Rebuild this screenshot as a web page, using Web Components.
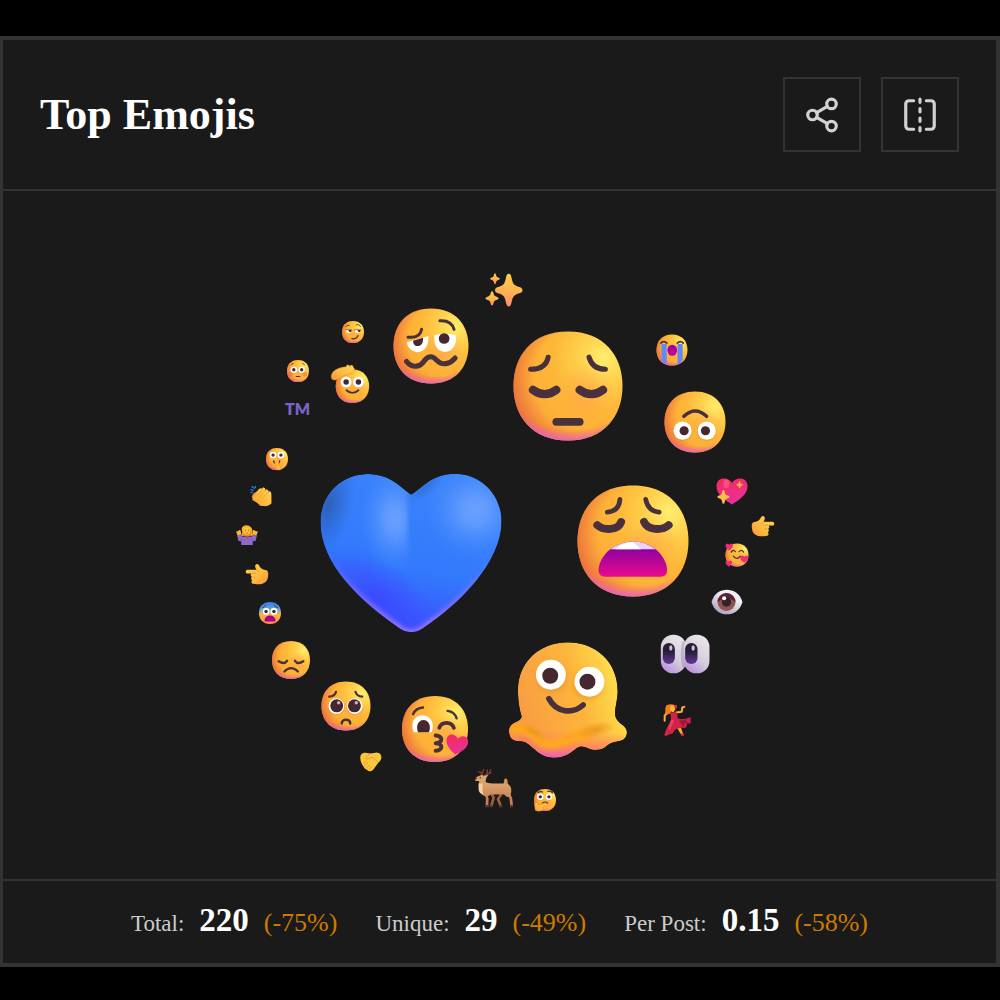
<!DOCTYPE html>
<html lang="en">
<head>
<meta charset="utf-8">
<meta name="viewport" content="width=device-width, initial-scale=1">
<title>Top Emojis</title>
<style>
  body {
    margin: 0;
    padding: 36px 0;
    background: #000;
    color: #fff;
    font-family: "Liberation Serif", serif;
  }
</style>
</head>
<body>
<stats-card>
  <h2 slot="title">Top Emojis</h2>
  <icon-button slot="actions" icon="share" label="Share"></icon-button>
  <icon-button slot="actions" icon="compare" label="Compare" style="--edge: #38332e"></icon-button>
  <emoji-cloud></emoji-cloud>
  <stat-item slot="stats" label="Total:" value="220" change="(-75%)"></stat-item>
  <stat-item slot="stats" label="Unique:" value="29" change="(-49%)"></stat-item>
  <stat-item slot="stats" label="Per Post:" value="0.15" change="(-58%)"></stat-item>
</stats-card>

<script>
customElements.define('stats-card', class StatsCard extends HTMLElement {
  constructor() {
    super();
    this.attachShadow({mode: 'open'});
    this.shadowRoot.innerHTML = `
    <style>
      :host {
        display: block;
        background: #1a1a1a;
        border: solid #333;
        border-width: 4px 4px 4px 3px;
      }
      header {
        display: flex;
        align-items: center;
        justify-content: space-between;
        padding: 37px;
        border-bottom: 2px solid #333;
      }
      .actions {
        display: flex;
        gap: 20px;
      }
      ::slotted(h2) {
        margin: 0;
        font-size: 44px;
        line-height: 48px;
        font-weight: 700;
      }
      footer {
        display: flex;
        flex-wrap: wrap;
        align-items: baseline;
        justify-content: center;
        gap: 16px 38px;
        padding: 19px 36px;
        border-top: 2px solid #333;
      }
    </style>
    <header>
      <slot name="title"></slot>
      <div class="actions"><slot name="actions"></slot></div>
    </header>
    <main><slot></slot></main>
    <footer><slot name="stats"></slot></footer>
    `;
  }
});

customElements.define('stat-item', class StatItem extends HTMLElement {
  constructor() {
    super();
    this.attachShadow({mode: 'open'});
  }

  connectedCallback() {
    this.shadowRoot.innerHTML = `
    <style>
      :host {
        display: flex;
        align-items: baseline;
        gap: 15px;
        line-height: 40px;
        white-space: nowrap;
      }
      .label {
        font-size: 23px;
        color: #ccc;
      }
      .value {
        font-size: 33px;
        font-weight: 700;
      }
      .change {
        font-size: 26px;
        color: #cc7a00;
      }
    </style>
    <span class="label">${this.getAttribute('label')}</span>
    <span class="value">${this.getAttribute('value')}</span>
    <span class="change">${this.getAttribute('change')}</span>
    `;
  }
});

const icons = {
  share: `
    <circle cx="18" cy="5" r="3"/><circle cx="6" cy="12" r="3"/><circle cx="18" cy="19" r="3"/>
    <path d="M8.6 13.5l6.8 4M15.4 6.5l-6.8 4"/>`,
  compare: `
    <path d="M8 3H5a2 2 0 0 0-2 2v14c0 1.1.9 2 2 2h3"/>
    <path d="M16 3h3a2 2 0 0 1 2 2v14a2 2 0 0 1-2 2h-3"/>
    <path d="M12 20v2M12 14v2M12 8v2M12 2v2"/>`
};

customElements.define('icon-button', class IconButton extends HTMLElement {
  constructor() {
    super();
    this.attachShadow({mode: 'open'});
  }

  connectedCallback() {
    this.shadowRoot.innerHTML = `
    <style>
      :host {
        display: block;
      }
      button {
        display: flex;
        align-items: center;
        justify-content: center;
        width: 78px;
        height: 75px;
        padding: 0;
        border: 2px solid var(--edge, #333);
        background: transparent;
        color: #d2d2d2;
        cursor: pointer;
      }
      button:hover {
        background: #242424;
      }
      svg {
        width: 38px;
        height: 38px;
        fill: none;
        stroke: currentColor;
        stroke-width: 2;
        stroke-linecap: round;
        stroke-linejoin: round;
      }
    </style>
    <button type="button" aria-label="${this.getAttribute('label')}">
      <svg viewBox="0 0 24 24" aria-hidden="true">${icons[this.getAttribute('icon')]}</svg>
    </button>
    `;
  }
});

// gradients shared by all the drawings; ids stay inside each shadow root
const defs = `
<defs>
  <radialGradient id="skin" cx=".83" cy=".24" r=".85">
    <stop offset="0" stop-color="#ffee6e"/>
    <stop offset=".26" stop-color="#ffd14c"/>
    <stop offset=".56" stop-color="#feb738"/>
    <stop offset="1" stop-color="#fcab38"/>
  </radialGradient>
  <radialGradient id="side" cx=".68" cy=".42" r=".74">
    <stop offset=".66" stop-color="#ea6a3c" stop-opacity="0"/>
    <stop offset="1" stop-color="#e8603f" stop-opacity=".9"/>
  </radialGradient>
  <radialGradient id="under" cx=".54" cy=".16" r=".86">
    <stop offset=".86" stop-color="#f0688c" stop-opacity="0"/>
    <stop offset="1" stop-color="#e45ddc"/>
  </radialGradient>
  <radialGradient id="cheek" cx=".66" cy=".56" r=".26">
    <stop offset="0" stop-color="#ff9d4a" stop-opacity=".6"/>
    <stop offset="1" stop-color="#ff9d4a" stop-opacity="0"/>
  </radialGradient>
  <linearGradient id="mouth" x1="0" y1="0" x2="0" y2="1">
    <stop offset=".2" stop-color="#8d00a0"/>
    <stop offset="1" stop-color="#ea0a8c"/>
  </linearGradient>
  <linearGradient id="hand" x1="1" y1="0" x2="0" y2="1">
    <stop offset="0" stop-color="#ffd755"/>
    <stop offset=".6" stop-color="#fdb93c"/>
    <stop offset="1" stop-color="#f59445"/>
  </linearGradient>
  <linearGradient id="rose" x1="0" y1="0" x2=".3" y2="1">
    <stop offset="0" stop-color="#f42a5a"/>
    <stop offset="1" stop-color="#e9309a"/>
  </linearGradient>
  <linearGradient id="star" x1=".5" y1="0" x2=".4" y2="1">
    <stop offset="0" stop-color="#ffcd4a"/>
    <stop offset=".5" stop-color="#ffb54f"/>
    <stop offset="1" stop-color="#ff8a6e"/>
  </linearGradient>
</defs>`;

const round = 'M16 30C25.3 30 30 23.7 30 16S25.3 2 16 2 2 8.3 2 16s4.7 14 14 14Z';
const head = `
  <path d="${round}" fill="url(#skin)"/>
  <path d="${round}" fill="url(#cheek)"/>
  <path d="${round}" fill="url(#side)"/>
  <path d="${round}" fill="url(#under)"/>`;
const line = (d, width = 1.3) =>
  `<path d="${d}" fill="none" stroke="#48303c" stroke-width="${width}" stroke-linecap="round" stroke-linejoin="round"/>`;
const eye = (x, y, r, px = x, py = y, pr = r / 2) =>
  `<circle cx="${x}" cy="${y + .3}" r="${r + .3}" fill="#d97c1c" opacity=".35"/>
   <circle cx="${x}" cy="${y}" r="${r}" fill="#fff"/>
   <circle cx="${px}" cy="${py}" r="${pr}" fill="#44272f"/>`;
const face = art => ({box: '2 2 28 28', art: head + art});
const heart = (x, y, sx, sy = sx, turn = 0) =>
  `<path transform="translate(${x} ${y}) rotate(${turn}) scale(${sx} ${sy})" fill="url(#rose)" d="M5 2C4 0 0-.4 0 3.200 0 6 3 8 5 9.300 7 8 10 6 10 3.200 10-.4 6 0 5 2Z"/>`;
const spark = (x, y, rx, ry, fill = 'url(#star)') =>
  `<path transform="translate(${x} ${y}) scale(${rx} ${ry})" fill="${fill}" d="M0-1C.12-1 .17-.9 .2-.76 .29-.38 .38-.29 .78-.19 .92-.15 1-.1 1 0S.92.15 .78.19C.38.29 .29.38 .2.76 .17.9 .12 1 0 1S-.17.9-.2.76C-.29.38-.38.29-.78.19-.92.15-1 .1-1 0S-.92-.15-.78-.19C-.38-.29-.29-.38-.2-.76-.17-.9-.12-1 0-1Z"/>`;

const heartShape = 'M333 132C303 114 272 70 203 70 120 70 60 135 60 215c0 130 125 240 240 320q33 22 65 0C480 460 604 335 604 213 604 135 545 69 462 69c-67 0-99 45-129 63Z';
const meltShape = 'M234 36C150 36 84 95 84 180c0 36 5 58 11 80q-1 10-20 18c-17 8-20 21-17 34 4 20 20 22 38 22 29 4 44 48 97 50 52-2 60-34 82-34 20 2 25 11 45 10 30-1 30-20 55-24 20-2 35-6 37-28 0-23-27-25-34-46-6-22 6-47 6-79C384 95 318 36 234 36Z';
const pointing = `
  <path fill="url(#hand)" d="M5 20C0 26 0 32 2 42c1 10 10 20 24 21 14 0 22 0 25-3 3-3 1-8-1-9 5-3 5-8 1-10 5-3 5-8 2-11h12c7 0 7-11 0-12H37c4-5 6-12 2-16-4-4-9 0-10 3-3 8-11 14-24 15Z"/>
  <path fill="none" stroke="#e88a2c" stroke-width="2" d="M52 29H38M48 41h-7M28 24q8-2 10-7"/>`;

const emojis = {
  sparkles: {
    box: '313 40 113 101',
    art: `${spark(384, 91, 42, 50)}${spark(342, 56, 15, 16)}${spark(333, 116, 20, 22)}`
  },
  woozy: face(`
    <path d="M7 14.600 15 12.300c.3 3-1 5.800-3.800 6-2.400 0-4-1.800-4.200-3.700Z" fill="#fff"/>
    <path d="M9.300 14 13 12.900c.2 1.800-.6 3.100-2 3.100-1.100 0-1.700-.9-1.700-2Z" fill="#44272f"/>
    <path d="M17.300 12C18.500 11.300 24 11.300 25.300 12 25.700 15.800 23.800 18.200 21.200 18.200 18.400 18.200 16.800 15.600 17.300 12Z" fill="#fff"/>
    <circle cx="20.900" cy="13.200" r="2" fill="#44272f"/>
    ${line('M7.400 12.700Q12 13.200 12.500 9.700', 1.1)}${line('M19.300 6.600Q23.600 6.300 24.600 9.800', 1.1)}
    ${line('M6.900 21.800C9 24.300 11.800 24 13.300 21.800 15 19.500 16.500 19.600 18 21.200 20.300 23.500 23 22.800 25 20.500', 1.9)}`),
  pensive: face(`
    ${line('M6.400 11.700Q10.300 11.700 10.900 8.600')}${line('M21.400 8.600Q22.300 11.700 25.600 11.700')}
    ${line('M7 17Q10 19.200 13 17', 2.1)}${line('M19 17Q22 19.200 25 17', 2.1)}
    ${line('M13 25.200H19', 2)}`),
  weary: face(`
    ${line('M9.500 8.700Q12.500 8.500 12.700 5.500', 1.2)}${line('M19.200 5.500Q19.800 8.500 22.600 8.700', 1.2)}
    ${line('M7 12C8.700 13.500 12.300 13.300 13 11.200', 2)}${line('M18.800 11.200C19.700 13.300 23.300 13.500 25 12', 2)}
    <path fill="url(#mouth)" d="M16 16.100C10.500 16.100 7.300 20.500 7.300 23.300Q7.300 25 9 25H23Q24.600 25 24.600 23.300C24.600 20.500 21.500 16.100 16 16.100Z"/>
    <path fill="#e9d3fb" d="M10.200 18.100C12 16.800 13.800 16.100 16 16.100s4 .7 5.700 2Z"/>
    <path fill="#fff" d="M11.500 18.100Q13 16.500 16 16.200l2 1.900Z"/>`),
  sob: face(`
    <path fill="#6188ff" d="M6.500 10.500h4.700V29Q8.400 28 6.500 25.500ZM21 10.500h4.600v15Q23.700 28 21 29Z"/>
    <ellipse cx="16.200" cy="16.200" rx="4.300" ry="5" fill="#a5009b"/><ellipse cx="16.200" cy="18" rx="2.500" ry="2.600" fill="#c4069a"/>
    ${line('M6 9.800Q8.500 7 11.400 9.800', 1.5)}${line('M20.800 9.800Q23.500 7 26.200 9.800', 1.5)}`),
  upside: face(`
    ${line('M10.900 13.400Q16.100 8.500 21.300 13.400', 1.6)}
    ${eye(10.3, 20, 4.2, 11, 20, 2.1)}${eye(21.4, 20, 4.2, 20.8, 20, 2.1)}`),
  kiss: face(`
    ${line('M6.700 9.700Q7.900 7.100 10.900 6.900', 1)}${line('M21.300 8.300Q24.300 8.600 25.200 11.500', 1)}
    <path fill="#fff" d="M7 17.400C5.300 13.500 7.300 10.200 10.700 10.200c3.500 0 5.300 3.600 3.900 7.200Z"/>
    <path fill="#44272f" d="M8.800 17.400C7.700 14.600 9 12.200 11.100 12.200s3.500 2.600 2.300 5.200Z"/>
    ${line('M17.800 15.500C18.800 12.700 23 12.700 24 15.500', 1.6)}
    ${line('M16.300 18.800C19.600 18.800 19.400 22 16.300 22 19.400 22 19.600 25.200 16.300 25.200', 1.7)}
    ${heart(21.4, 17.6, .92, .92, 9)}`),
  pleading: face(`
    ${line('M6.400 10.700Q9.700 10.500 10.300 7.900')}${line('M21.400 7.900Q22.100 10.500 25.300 10.700')}
    ${eye(10.5, 16.1, 4.5, 10.7, 15.9, 3.7)}${eye(21, 16.1, 4.5, 20.8, 15.9, 3.7)}
    <circle cx="11.800" cy="14.200" r="1" fill="#c9aeb2"/><circle cx="21.900" cy="14.200" r="1" fill="#c9aeb2"/>
    ${line('M13.600 25.900C13.600 23.200 18.200 23.200 18.400 25.900', 1.5)}`),
  sad: face(`
    ${line('M6.900 16.900Q11 19.600 13.100 16.600', 1.7)}${line('M18.900 16.600Q21 19.600 25.100 16.900', 1.7)}
    ${line('M11.100 24.500Q16.100 19.500 21.100 24.500', 1.6)}`),
  flushed: face(`
    ${eye(10.7, 14.4, 4.2)}${eye(20.7, 14.4, 4.2)}
    ${line('M7 8.500Q8 7 10 6.500M22 6.500Q24 7 25 8.500', 1)}${line('M13.800 23H18.200', 1.5)}
    <circle cx="6.500" cy="20" r="3" fill="#f0535c" opacity=".4"/><circle cx="25" cy="20" r="3" fill="#f0535c" opacity=".4"/>`),
  smirk: face(`
    <path fill="#fff" d="M6.500 13.500h8c0 5-8 5-8 0ZM18 13.500h8c0 5-8 5-8 0Z"/>
    <path fill="#44272f" d="M10.500 13.500h3.800c0 3.500-3.800 3.500-3.800 0ZM22 13.500h3.800c0 3.500-3.800 3.500-3.800 0Z"/>
    ${line('M6.500 9.500Q8 6.500 11 7.500M20 7Q24 5.500 25.500 9', 1.1)}${line('M6.500 13.300H14.500M18 13.300H26', .7)}
    ${line('M14.500 24.500Q20.500 25.500 22.500 20.500', 1.6)}`),
  shush: face(`
    ${eye(11, 11, 4.3)}${eye(21, 11, 4.3)}
    ${line('M11.500 18.500q1 1 1 2.500M19.500 18.500q-1 1-1 2.500', 1.6)}
    <path fill="url(#hand)" stroke="#e9852f" stroke-width=".5" d="M16.500 18q1.800 0 1.800 3v3l3 1.500L20 30h-5.500l-1-5 1.200-2V21q0-3 1.800-3Z"/>`),
  thinking: face(`
    ${eye(10, 12, 4.2)}${eye(21, 12, 4.2)}
    ${line('M7 6.500Q10 4.500 13 5.800M19.500 5Q23.500 4 25.500 7M12.500 20Q16.500 17 19.500 20', 1.4)}
    <path fill="url(#hand)" stroke="#d8802d" stroke-width=".5" d="M2.500 21Q5 18 7 20l.8 2.500L17 20.500q2 1 .2 2.700L13 25q2.500 2-1 4.500-5 2-8.500-.5Z"/>`),
  anguished: {
    box: '2 2 28 28',
    art: `<linearGradient id="cold" x1="0" y1="0" x2="0" y2="1">
        <stop offset=".08" stop-color="#3687e8"/><stop offset=".35" stop-color="#79a5cb"/>
        <stop offset=".58" stop-color="#ffb83e"/><stop offset="1" stop-color="#ff8a4a"/>
      </linearGradient>
      <path d="${round}" fill="url(#cold)"/>
      ${eye(11, 14, 4.4)}${eye(21, 14, 4.4)}
      ${line('M6.500 9Q9.500 8.800 10.500 6M21.500 6Q22.500 8.800 25.500 9', 1.2)}
      <path fill="#a60091" d="M16 19.200C11.500 19.200 9 22.500 9 25.700q0 1.200 1.200 1.200h11.600q1.200 0 1.200-1.200c0-3.200-2.500-6.500-7-6.500Z"/>`
  },
  loved: face(`
    ${line('M9 12.500Q11 8.500 14 12M18.500 12Q21.500 8.500 24 12.500', 1.5)}${line('M11.500 17.500Q16 23 20 17.500', 1.5)}
    ${heart(2, 2, .9)}${heart(2, 22.5, .8)}${heart(20, 16.5, 1)}`),
  heart: {
    box: '60 69 544 477',
    art: `<linearGradient id="h1" x1=".65" y1="0" x2=".4" y2="1">
        <stop offset="0" stop-color="#3b84fb"/><stop offset=".6" stop-color="#3279fc"/><stop offset="1" stop-color="#3c4dff"/>
      </linearGradient>
      <radialGradient id="h2"><stop offset="0" stop-color="#69a0ff"/><stop offset=".25" stop-color="#69a0ff" stop-opacity=".85"/><stop offset="1" stop-color="#478cff" stop-opacity="0"/></radialGradient>
      <radialGradient id="h3"><stop offset="0" stop-color="#2f5fb8"/><stop offset="1" stop-color="#2d66d0" stop-opacity="0"/></radialGradient>
      <radialGradient id="h4"><stop offset="0" stop-color="#3b47ff" stop-opacity=".9"/><stop offset="1" stop-color="#3b50ff" stop-opacity="0"/></radialGradient>
      <linearGradient id="h5" x1="0" y1="0" x2="0" y2="1"><stop offset=".5" stop-color="#9673ff" stop-opacity="0"/><stop offset=".95" stop-color="#9673ff"/></linearGradient>
      <filter id="soft" x="-20%" y="-20%" width="140%" height="140%"><feGaussianBlur stdDeviation="7"/></filter>
      <clipPath id="hc"><path d="${heartShape}"/></clipPath>
      <clipPath id="half"><path d="M60 20H318L324 300 330 420H60Z"/></clipPath>
      <g clip-path="url(#hc)">
        <path d="${heartShape}" fill="url(#h1)"/>
        <ellipse cx="240" cy="450" rx="230" ry="110" fill="url(#h4)" transform="rotate(40 240 450)"/>
        <ellipse cx="84" cy="165" rx="75" ry="150" fill="url(#h3)" transform="rotate(14 84 165)"/>
        <ellipse cx="375" cy="110" rx="80" ry="26" fill="url(#h3)" opacity=".5" transform="rotate(-38 375 110)"/>
        <ellipse cx="525" cy="180" rx="150" ry="150" fill="url(#h2)"/>
        <g filter="url(#soft)"><g clip-path="url(#half)"><ellipse cx="283" cy="205" rx="105" ry="160" fill="url(#h2)"/></g></g>
        <path d="${heartShape}" fill="none" stroke="url(#h5)" stroke-width="18" filter="url(#soft)"/>
      </g>`
  },
  melting: {
    box: '57 36 355 348',
    art: `<linearGradient id="m1" x1="1" y1=".2" x2="0" y2=".5">
        <stop offset=".1" stop-color="#ffdf4c"/><stop offset=".45" stop-color="#fdb53c"/><stop offset="1" stop-color="#f99a43"/>
      </linearGradient>
      <linearGradient id="m2" x1=".5" y1="0" x2=".45" y2="1">
        <stop offset=".76" stop-color="#ff8564" stop-opacity="0"/><stop offset=".9" stop-color="#ff8166" stop-opacity=".85"/><stop offset="1" stop-color="#e962b6"/>
      </linearGradient>
      <radialGradient id="m3"><stop offset="0" stop-color="#e8981a" stop-opacity=".9"/><stop offset="1" stop-color="#e8981a" stop-opacity="0"/></radialGradient>
      <filter id="mb" x="-20%" y="-30%" width="140%" height="160%"><feGaussianBlur stdDeviation="8"/></filter>
      <clipPath id="mc"><path d="${meltShape}"/></clipPath>
      <g clip-path="url(#mc)">
        <path d="${meltShape}" fill="url(#m1)"/><path d="${meltShape}" fill="url(#m2)"/>
        <g fill="none" stroke-linecap="round" filter="url(#mb)">
          <path d="M75 297C115 285 130 345 190 343 235 338 255 312 290 318" stroke="#fea91f" stroke-width="28"/>
          <path d="M92 326C115 316 125 345 142 356" stroke="#f2785f" stroke-width="12"/>
        </g>
        <ellipse cx="315" cy="300" rx="65" ry="24" fill="url(#m3)" transform="rotate(-12 315 300)"/>
        <ellipse cx="130" cy="305" rx="50" ry="16" fill="url(#m3)" transform="rotate(32 130 305)"/>
      </g>
      <g filter="url(#mb)" fill="#e08a22" opacity=".5"><circle cx="185" cy="142" r="46"/><circle cx="296" cy="163" r="46"/></g>
      <circle cx="183" cy="134" r="45" fill="#fff"/><circle cx="181" cy="137" r="24" fill="#44272f"/>
      <circle cx="299" cy="155" r="45" fill="#fff"/><circle cx="293" cy="155" r="24" fill="#44272f"/>
      ${line('M177 206C200 250 250 252 280 225', 17)}`
  },
  salute: {
    box: '300 163 113 116',
    art: `<g transform="translate(307 171) scale(3.550)">${head}
        ${eye(10.7, 12.5, 4.6)}${eye(21, 12.5, 4.6)}${line('M11 19.300Q16 23.800 21 19.300', 1.5)}</g>
      <path fill="url(#hand)" stroke="#e58a30" stroke-width="1.500" d="M302 205C296 190 312 172 345 170 346 162 354 163 355 168 360 163 367 166 366 172 372 174 370 182 364 186 355 195 340 193 330 200 318 210 306 212 302 205Z"/>`
  },
  sparkheart: {
    box: '228 471 94 82',
    art: `${heart(228, 470, 9.4, 8.9)}
      <ellipse cx="258" cy="490" rx="9" ry="13" fill="#fb6a83" opacity=".6"/>
      ${spark(298, 493, 10, 11, '#ffad3f')}${spark(249, 530, 18, 21, '#ffbd45')}`
  },
  pointright: {box: '0 0 71 63', art: pointing},
  pointleft: {box: '0 0 71 63', art: `<g transform="translate(71 0) scale(-1 1)">${pointing}</g>`},
  eye: {
    box: '453 360 93 74',
    art: `<linearGradient id="e1" x1=".8" y1="0" x2=".2" y2="1"><stop offset=".3" stop-color="#f3eff4"/><stop offset="1" stop-color="#a79bbb"/></linearGradient>
      <path fill="url(#e1)" d="M453 397C461 370 480 360 499 360s39 10 47 37C538 424 519 434 499 434S461 424 453 397Z"/>
      <circle cx="498" cy="397" r="27" fill="#8f5350"/><path fill="#5b2435" d="M471 397a27 27 0 0 1 54 0Q498 375 471 397Z"/>
      <circle cx="498" cy="397" r="14" fill="#33212c"/><circle cx="491" cy="386" r="6" fill="#fff"/>`
  },
  eyes: {
    box: '510 14 147 116',
    art: `<linearGradient id="y1" x1=".8" y1="0" x2=".3" y2="1"><stop offset="0" stop-color="#ece7ee"/><stop offset=".6" stop-color="#d5cddd"/><stop offset="1" stop-color="#b992dd"/></linearGradient>
      <linearGradient id="y2" x1="0" y1="0" x2="0" y2="1"><stop offset=".4" stop-color="#271d34"/><stop offset="1" stop-color="#65379b"/></linearGradient>
      <rect x="511" y="14" width="76" height="116" rx="37" fill="url(#y1)"/><rect x="517" y="39" width="36" height="63" rx="18" fill="url(#y2)"/>
      <ellipse cx="579" cy="74" rx="8" ry="42" fill="#8c829b" opacity=".4"/>
      <rect x="580" y="14" width="77" height="116" rx="37" fill="url(#y1)"/><rect x="584" y="39" width="37" height="63" rx="18" fill="url(#y2)"/>
      <ellipse cx="541" cy="54" rx="5" ry="8" fill="#cdc3d3"/><ellipse cx="608" cy="54" rx="5" ry="8" fill="#cdc3d3"/>`
  },
  dancer: {
    box: '520 223 84 95',
    art: `<path fill="none" stroke="#f7b32e" stroke-width="6" stroke-linecap="round" stroke-linejoin="round" d="M541 244 525 257 525 273M560 248 576 246 578 233 584 231"/>
      <path fill="#f7a92f" d="m562 294 12 0 7 20h-7ZM528 308l10-5 1 9-10 5Z"/>
      <path fill="#ef7d25" d="M530 226q14-5 27 0l-6 16q-9 2-9 10l-18 3q3-6 3-12-1-10 3-17Z"/>
      <path fill="#f9b731" d="M541 230q7-6 15 1l1 9-7 8-8-6Z"/>
      <path fill="#ee2540" d="m553 226 8-1 1 9-6 3Z"/>
      <path fill="#d22347" d="m542 247 20 1 2 18 12 2q17-1 27-6l0 19-10 0-4 13-15 0-18 5-7 12-17 4-7-2q4-15 11-28 7-10 8-19Z"/>
      <path fill="#a21739" d="m568 273 25-5-4 8h12l-7 5h-9l-2 11-7-7Z"/>
      <path fill="#e94264" d="m545 270 8 1-12 29-5-2Z"/>
      <path fill="#ee2540" d="m524 313 10-2-1 6h-9ZM574 311l9 0 0 7h-9Z"/>`
  },
  deer: {
    box: '492 296 116 115',
    art: `<linearGradient id="d1" x1=".5" y1="0" x2=".5" y2="1"><stop offset=".3" stop-color="#dda46c"/><stop offset="1" stop-color="#c9875a"/></linearGradient>
      <path fill="none" stroke="#813f33" stroke-width="4" stroke-linecap="round" d="M514 317Q511 303 505 306M514 313 519 299M520 317 529 313 530 300M529 312 541 308M537 307 540 299"/>
      <path fill="none" stroke="#a05d3e" stroke-width="8" stroke-linejoin="round" d="M542 370 549 382 541 410M572 372 562 386 571 410"/>
      <path fill="none" stroke="#c58055" stroke-width="8" stroke-linejoin="round" d="M525 368 530 385 529 410M592 366 600 384 603 410"/>
      <path fill="#cf925e" d="M578 344 581 327Q586 323 590 330L592 350Z"/>
      <path fill="url(#d1)" d="M520 334C535 343 565 340 584 340 598 342 603 352 601 366L598 380Q588 383 580 373H540Q534 380 522 377 510 374 508 360L506 338 520 322Z"/>
      <path fill="#dba36c" d="M493 327Q497 319 507 317L514 314 520 318 534 313 527 324 524 340 507 341 505 333 495 333Z"/>
      <path fill="#f4d3a0" d="m504 339 12 2q-1 21 2 31-14-2-14-18Z"/>
      <path fill="#4a292e" d="m493 323 6 0-1 5-5 0Z"/><circle cx="509" cy="323" r="2" fill="#38242d"/>
      <path fill="#583232" d="M525 404h9v7h-9ZM537 404h8v7h-8ZM599 404h8v7h-8ZM566 404h9v7h-9Z"/>`
  },
  handshake: {
    box: '149 248 65 58',
    art: `<path fill="#fdc63f" d="M152 252q8-5 17-3l12 2 15-3q10-1 15 5 4 8 2 14-2 8-9 12l-15 21q-9 9-16 4l-11-7-6-9q-10-15-7-30Z"/>
      <path fill="none" stroke="#d98a25" stroke-width="2" stroke-linecap="round" d="m178 251-13 13q3 8 13 2l7-4 18 15M158 281l8-5M161 289l10-9M168 296l9-9M176 301l7-8"/>`
  },
  shrug: {
    box: '17 164 67 61',
    art: `<path fill="#fbb22f" d="m36 185-4 12h37l-2-17q-3-14-17-15-14 0-16 11Z"/>
      <path fill="#e38322" d="M37 182q-1 16 13 18 16-1 14-18l-5-3H41Z"/>
      <circle cx="50" cy="183" r="11" fill="#ffc83d"/>
      <path fill="none" stroke="#8e4b2b" stroke-width="2" d="M44 179h4M54 179h4M45 183h2M55 183h2M47 190q4-3 7 0"/>
      <path fill="#9168c4" d="m20 194 11 0 5 5 14 1 15-1 5-5h11l-4 18-9 2v11H33v-11l-9-2Z"/>
      <path fill="none" stroke="#7045ab" stroke-width="2" d="m33 214 2-8M68 214l-2-8M45 200q6 5 11 0"/>
      <path fill="#ffb82d" d="m17 184 6-1 4-4 4 1 2 13-11 2ZM84 184l-7-1-4-4-4 1-1 13 11 2Z"/>`
  },
  clap: {
    box: '57 46 67 65',
    art: `<path fill="none" stroke="#1685df" stroke-width="4" stroke-linecap="round" d="m60 59 7 2M63 50l7 5M73 49v4M60 68l4-1"/>
      <path fill="#eb8e37" d="m62 82 4-10 25-17 8 4 13 2 9 8 1 33-15 8-20-2Z"/>
      <path fill="url(#hand)" d="m65 85 19-28 6-2 2 3 5-6 6 3 0 5 6-2 3 6 0 6 5-6q5 0 5 8l0 28q-8 11-25 9-8 0-12-7L64 91Z"/>
      <path fill="none" stroke="#e79432" stroke-width="2" stroke-linecap="round" d="M94 59 78 78M103 61 84 84M111 69 92 88"/>`
  }
};

customElements.define('emoji-mark', class EmojiMark extends HTMLElement {
  constructor() {
    super();
    this.attachShadow({mode: 'open'});
  }

  connectedCallback() {
    const name = this.getAttribute('name');
    const emoji = emojis[name];
    this.shadowRoot.innerHTML = `
    <style>
      :host {
        display: block;
      }
      svg {
        display: block;
        width: 100%;
        overflow: visible;
      }
      span {
        display: block;
        font: 800 16px/16px Lato, sans-serif;
        text-align: center;
        color: #7c62c8;
      }
    </style>
    ${emoji ? `<svg viewBox="${emoji.box}" role="img" aria-label="${name}">${defs}${emoji.art}</svg>` : '<span>TM</span>'}
    `;
  }
});

// [name, x, y, width], measured from the middle of the cloud
const cloud = [
  ['heart', -89, 18, 181],
  ['weary', 133, 6, 111],
  ['pensive', 68, -149, 109],
  ['melting', 68, 165, 118],
  ['woozy', -69, -189, 75],
  ['kiss', -65, 194, 66],
  ['upside', 195, -113, 61],
  ['pleading', -154, 171, 49],
  ['eyes', 185, 119, 49],
  ['sad', -209, 125, 38],
  ['deer', -6, 253, 39],
  ['salute', -150, -151, 38],
  ['sparkles', 4, -245, 37],
  ['sob', 172, -185, 31],
  ['sparkheart', 232, -44, 31],
  ['eye', 227, 67, 31],
  ['dancer', 177, 185, 28],
  ['trademark', -202, -126, 26],
  ['loved', 237, 20, 23],
  ['pointright', 263, -9, 23],
  ['pointleft', -243, 39, 23],
  ['flushed', -202, -164, 22],
  ['smirk', -147, -203, 22],
  ['shush', -223, -76, 22],
  ['clap', -239, -39, 22],
  ['shrug', -253, 0, 22],
  ['anguished', -230, 78, 22],
  ['handshake', -129, 227, 21],
  ['thinking', 45, 265, 22]
];

customElements.define('emoji-cloud', class EmojiCloud extends HTMLElement {
  constructor() {
    super();
    this.attachShadow({mode: 'open'});
    this.shadowRoot.innerHTML = `
    <style>
      :host {
        display: block;
        position: relative;
        min-height: 688px;
        overflow: hidden;
      }
      emoji-mark {
        position: absolute;
        left: calc(50% + var(--x));
        top: calc(50% + var(--y));
        width: var(--size);
        transform: translate(-50%, -50%);
      }
    </style>
    ${cloud.map(([name, x, y, size]) =>
      `<emoji-mark name="${name}" style="--x: ${x}px; --y: ${y}px; --size: ${size}px"></emoji-mark>`).join('')}
    `;
  }
});
</script>
</body>
</html>
